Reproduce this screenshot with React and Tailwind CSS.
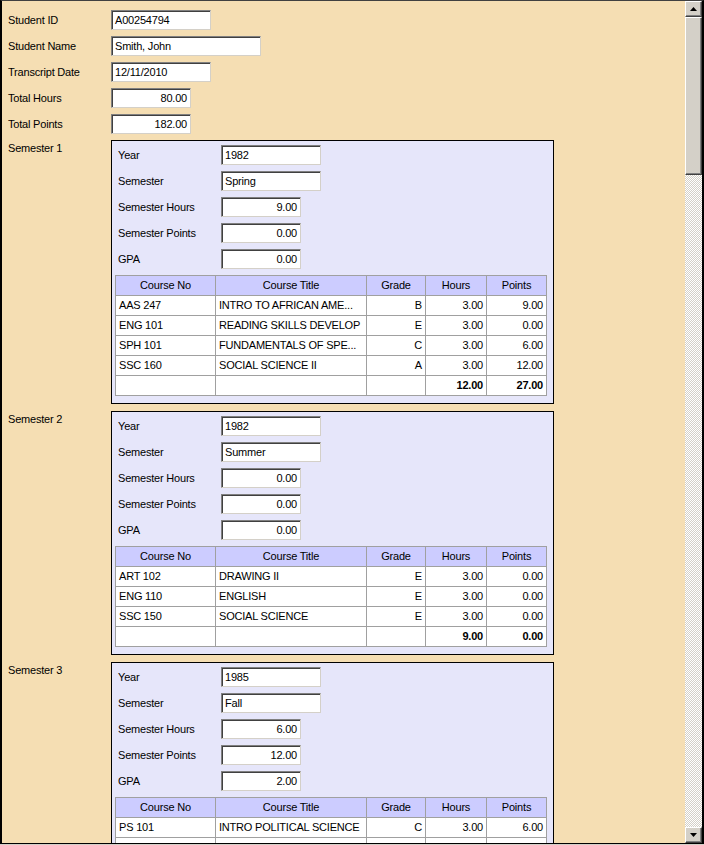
import React from "react";

const Field = ({ value, w, right }) => (
  <div
    className={`h-[20px] ${w} bg-white border border-t-[#808080] border-l-[#808080] border-b-[#d4d0c8] border-r-[#d4d0c8] shadow-[inset_1px_1px_0_#404040] flex items-center pl-[3px] pr-[3px] ${right ? "justify-end" : ""} leading-none whitespace-nowrap overflow-hidden`}
  >
    {value}
  </div>
);

const Row = ({ label, children }) => (
  <div className="flex items-center h-[20px]">
    <div className="w-[103px] shrink-0">{label}</div>
    {children}
  </div>
);

const semesters = [
  {
    name: "Semester 1",
    year: "1982",
    sem: "Spring",
    hours: "9.00",
    points: "0.00",
    gpa: "0.00",
    courses: [
      ["AAS 247", "INTRO TO AFRICAN AME...", "B", "3.00", "9.00"],
      ["ENG 101", "READING SKILLS DEVELOP", "E", "3.00", "0.00"],
      ["SPH 101", "FUNDAMENTALS OF SPE...", "C", "3.00", "6.00"],
      ["SSC 160", "SOCIAL SCIENCE II", "A", "3.00", "12.00"],
    ],
    tot: ["12.00", "27.00"],
  },
  {
    name: "Semester 2",
    year: "1982",
    sem: "Summer",
    hours: "0.00",
    points: "0.00",
    gpa: "0.00",
    courses: [
      ["ART 102", "DRAWING II", "E", "3.00", "0.00"],
      ["ENG 110", "ENGLISH", "E", "3.00", "0.00"],
      ["SSC 150", "SOCIAL SCIENCE", "E", "3.00", "0.00"],
    ],
    tot: ["9.00", "0.00"],
  },
  {
    name: "Semester 3",
    year: "1985",
    sem: "Fall",
    hours: "6.00",
    points: "12.00",
    gpa: "2.00",
    courses: [
      ["PS 101", "INTRO POLITICAL SCIENCE", "C", "3.00", "6.00"],
    ],
    tot: ["", ""],
  },
];

const td = "h-[20px] p-0 px-[3px] border border-[#a0a0a0] leading-none whitespace-nowrap";

const Semester = ({ s }) => (
  <div className="flex">
    <div className="w-[103px] shrink-0 pt-[2px] leading-[12px]">{s.name}</div>
    <div className="w-[443px] border border-black bg-[#e6e6fa] pt-[4px] pb-[7px] flex flex-col">
      <div className="flex flex-col gap-[6px] pl-[6px]">
        <Row label="Year"><Field value={s.year} w="w-[100px]" /></Row>
        <Row label="Semester"><Field value={s.sem} w="w-[100px]" /></Row>
        <Row label="Semester Hours"><Field value={s.hours} w="w-[80px]" right /></Row>
        <Row label="Semester Points"><Field value={s.points} w="w-[80px]" right /></Row>
        <Row label="GPA"><Field value={s.gpa} w="w-[80px]" right /></Row>
      </div>
      <table className="ml-[3px] mt-[6px] w-[432px] border-collapse border border-[#808080] bg-white table-fixed">
        <colgroup>
          <col className="w-[100px]" />
          <col className="w-[151px]" />
          <col className="w-[59px]" />
          <col className="w-[61px]" />
          <col className="w-[60px]" />
        </colgroup>
        <thead>
          <tr className="bg-[#ccccff]">
            <th className={`${td} font-normal text-center`}>Course No</th>
            <th className={`${td} font-normal text-center`}>Course Title</th>
            <th className={`${td} font-normal text-center`}>Grade</th>
            <th className={`${td} font-normal text-center`}>Hours</th>
            <th className={`${td} font-normal text-center`}>Points</th>
          </tr>
        </thead>
        <tbody>
          {s.courses.map((c, i) => (
            <tr key={i}>
              <td className={`${td} text-left`}>{c[0]}</td>
              <td className={`${td} text-left`}>{c[1]}</td>
              <td className={`${td} text-right`}>{c[2]}</td>
              <td className={`${td} text-right`}>{c[3]}</td>
              <td className={`${td} text-right`}>{c[4]}</td>
            </tr>
          ))}
          <tr>
            <td className={td}></td>
            <td className={td}></td>
            <td className={td}></td>
            <td className={`${td} text-right font-bold`}>{s.tot[0]}</td>
            <td className={`${td} text-right font-bold`}>{s.tot[1]}</td>
          </tr>
        </tbody>
      </table>
    </div>
  </div>
);

const Arrow = ({ up }) => (
  <div className="h-[16px] w-full bg-[#d4d0c8] border border-t-white border-l-white border-r-[#404040] border-b-[#404040] shadow-[inset_-1px_-1px_0_#808080] flex items-center justify-center">
    <svg width="7" height="4" viewBox="0 0 7 4">
      {up ? <path d="M3.5 0 L7 4 L0 4 Z" fill="#000" /> : <path d="M0 0 L7 0 L3.5 4 Z" fill="#000" />}
    </svg>
  </div>
);

export default function App() {
  return (
    <div className="w-[704px] h-[845px] bg-[#d4d0c8] overflow-hidden font-['Liberation_Sans',Arial,sans-serif] text-[11px] tracking-[-0.2px] text-black">
      <div className="flex h-[844px] border-t border-t-[#404040] border-l-2 border-r-2 border-b border-black">
        <div className="flex-1 bg-[#f5deb3] overflow-hidden">
          <div className="pt-[9px] pl-[6px] flex flex-col gap-[6px]">
            <Row label="Student ID"><Field value="A00254794" w="w-[100px]" /></Row>
            <Row label="Student Name"><Field value="Smith, John" w="w-[150px]" /></Row>
            <Row label="Transcript Date"><Field value="12/11/2010" w="w-[100px]" /></Row>
            <Row label="Total Hours"><Field value="80.00" w="w-[80px]" right /></Row>
            <Row label="Total Points"><Field value="182.00" w="w-[80px]" right /></Row>
            <div className="flex flex-col gap-[7px]">
              {semesters.map((s) => (
                <Semester key={s.name} s={s} />
              ))}
            </div>
          </div>
        </div>
        <div className="w-[17px] shrink-0 flex flex-col">
          <Arrow up />
          <div className="h-[158px] bg-[#d4d0c8] border border-t-white border-l-white border-r-[#404040] border-b-[#404040] shadow-[inset_-1px_-1px_0_#808080]" />
          <div className="flex-1 bg-[repeating-conic-gradient(#d4d0c8_0_25%,#ffffff_0_50%)] bg-[length:2px_2px]" />
          <Arrow />
        </div>
      </div>
    </div>
  );
}
